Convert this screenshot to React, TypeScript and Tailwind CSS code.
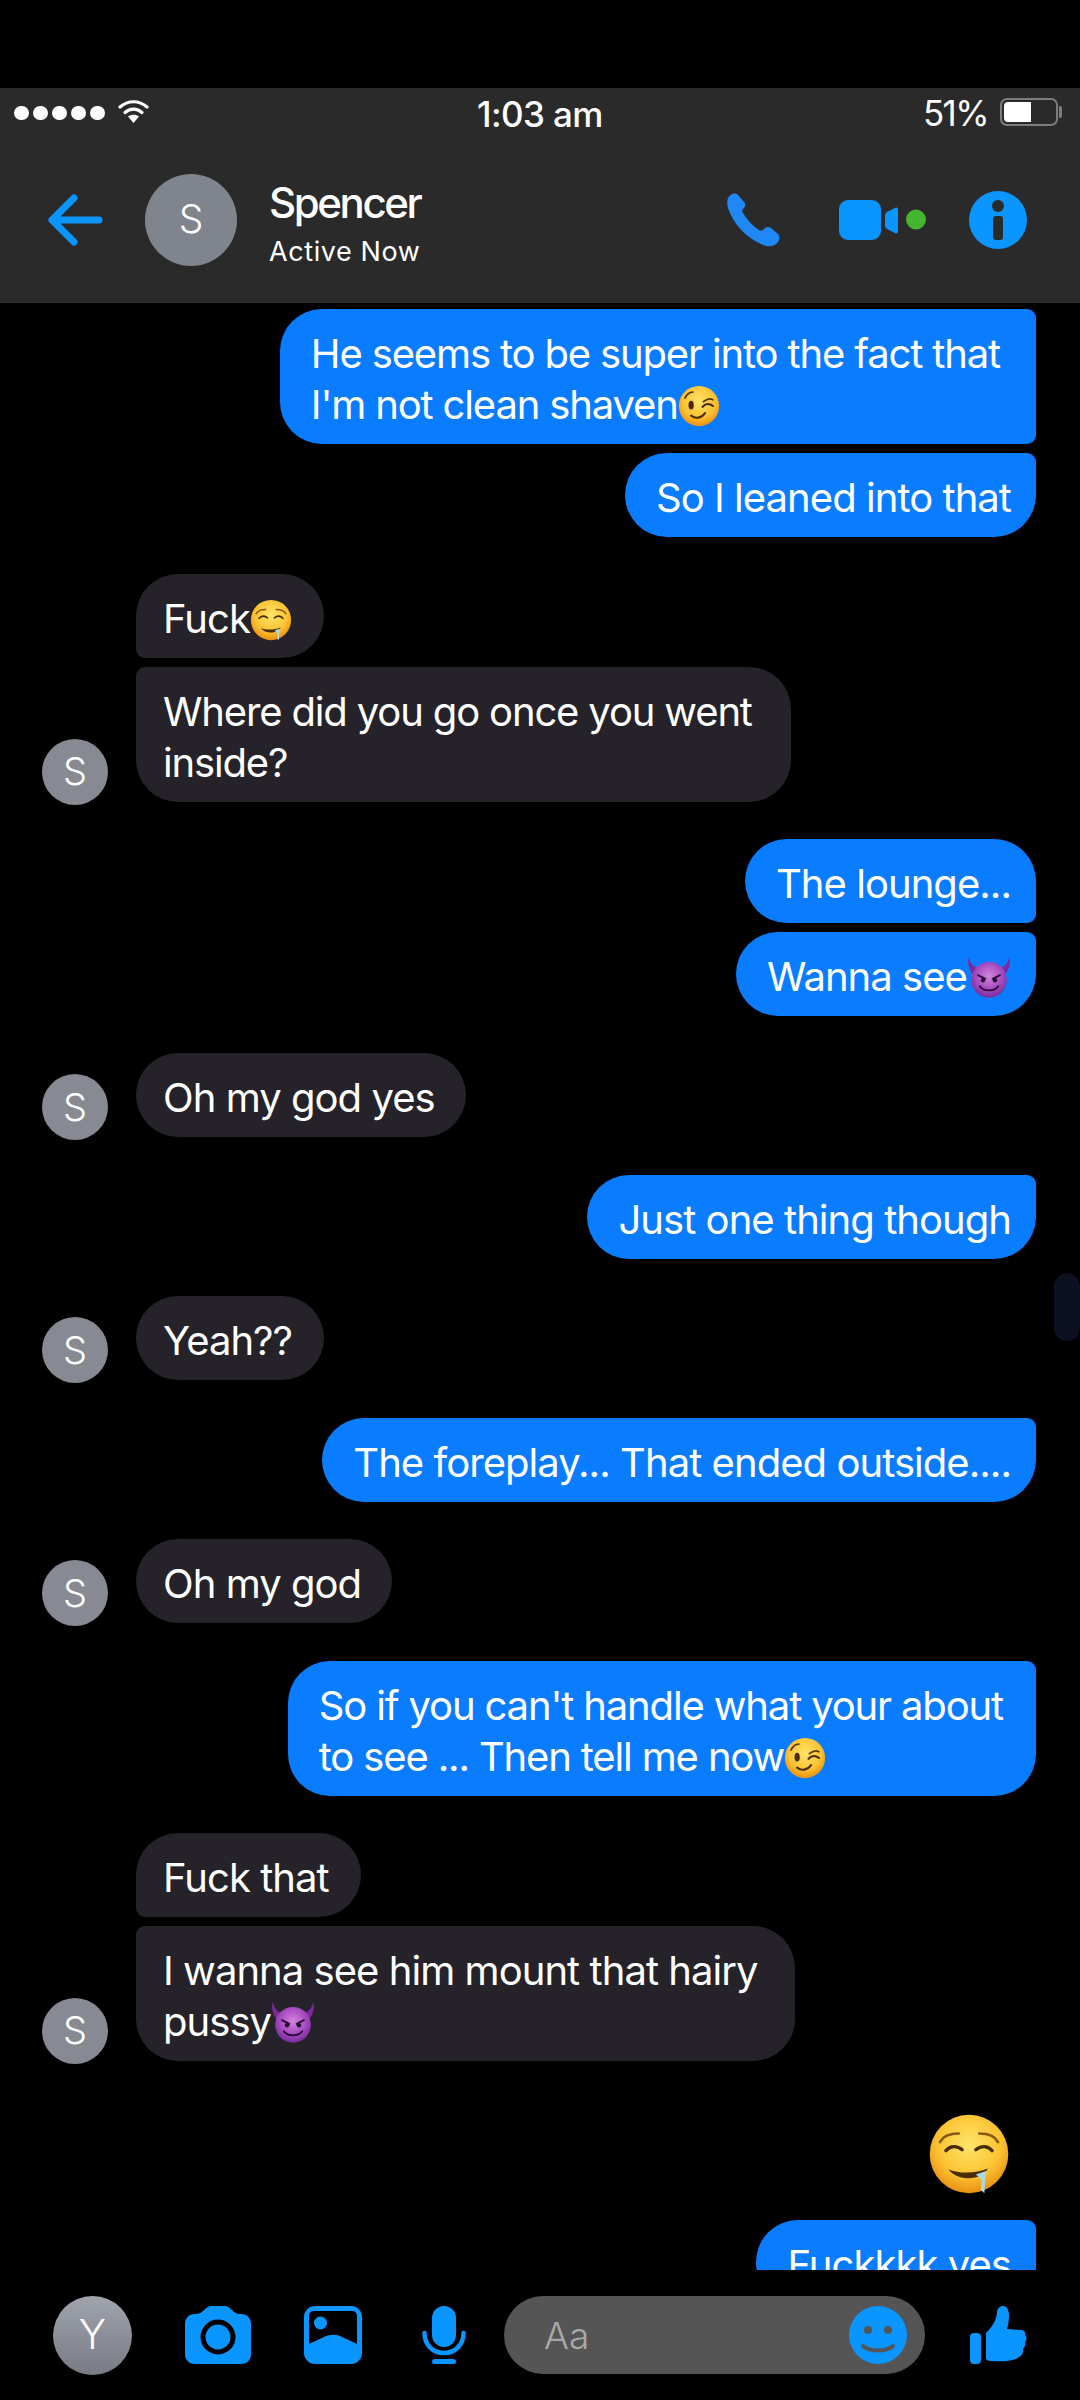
import { ReactNode } from "react";

const SANS = { fontFamily: "Inter, 'Noto Sans', sans-serif" };

type Corners = string;

function Face({ id, kind }: { id: string; kind: "drool" | "wink" | "devil" }) {
  if (kind === "devil") {
    return (
      <>
        <defs>
          <radialGradient id={id} cx="50%" cy="40%" r="60%">
            <stop offset="0%" stopColor="#d583e0" />
            <stop offset="60%" stopColor="#a64cc0" />
            <stop offset="100%" stopColor="#7a2c9c" />
          </radialGradient>
        </defs>
        <path d="M2 2 C3 9 7 13 13 15 L7 22 C2 16 0 9 2 2Z M46 2 C45 9 41 13 35 15 L41 22 C46 16 48 9 46 2Z" fill="#7a2a9a" />
        <circle cx="24" cy="27" r="19.5" fill={`url(#${id})`} />
        <path d="M12 22 L20 26 M36 22 L28 26" stroke="#2b0a35" strokeWidth="2" strokeLinecap="round" />
        <ellipse cx="17.5" cy="27.5" rx="2.4" ry="2.4" fill="#2b0a35" />
        <ellipse cx="30.5" cy="27.5" rx="2.4" ry="2.4" fill="#2b0a35" />
        <path d="M14 34 C18 40 30 40 34 34" stroke="#2b0a35" strokeWidth="2" fill="none" strokeLinecap="round" />
      </>
    );
  }
  return (
    <>
      <defs>
        <radialGradient id={id} cx="50%" cy="38%" r="65%">
          <stop offset="0%" stopColor="#ffe46a" />
          <stop offset="62%" stopColor="#fcc332" />
          <stop offset="100%" stopColor="#e8880f" />
        </radialGradient>
      </defs>
      <circle cx="24" cy="24" r="23" fill={`url(#${id})`} />
      {kind === "drool" ? (
        <>
          <path d="M7 17 C9 13 13 12 18 12 M41 17 C39 13 35 12 30 12" stroke="#8a5a12" strokeWidth="1.6" fill="none" strokeLinecap="round" />
          <path d="M10.5 22 C13 19 17 19 20 21.5 M37.5 22 C35 19 31 19 28 21.5" stroke="#4a2d08" strokeWidth="2" fill="none" strokeLinecap="round" />
          <path d="M12 33 C18 35.5 28 35.5 35 32.5 C32 39.5 18 40.5 12 33Z" fill="#4a2d08" />
          <path d="M28 36 L34 34 L33.5 38 L33 47 L31 45 L31.5 39Z" fill="#a9dbe8" />
        </>
      ) : (
        <>
          <path d="M8 15 C10 10 13 8 17 8 M29 19 C33 16 37 15 40 17" stroke="#5a390b" strokeWidth="2" fill="none" strokeLinecap="round" />
          <ellipse cx="15" cy="23" rx="3" ry="5" fill="#4a2d08" />
          <path d="M28 25 C31 21 36 21 40 24" stroke="#4a2d08" strokeWidth="2.4" fill="none" strokeLinecap="round" />
          <path d="M15 35 C20 39 27 38 31 32" stroke="#4a2d08" strokeWidth="2.4" fill="none" strokeLinecap="round" />
        </>
      )}
    </>
  );
}

function Emoji({ kind, id }: { kind: "drool" | "wink" | "devil"; id: string }) {
  return (
    <svg viewBox="0 0 48 48" className={kind === "devil" ? "inline-block w-[44px] h-[44px] align-[-8px]" : "inline-block w-[42px] h-[42px] align-[-8px]"}>
      <Face id={id} kind={kind} />
    </svg>
  );
}

function Sent({ children, corners, pr = "pr-[25px]", tight = false }: { children: ReactNode; corners: Corners; pr?: string; tight?: boolean }) {
  return (
    <div className={`self-end bg-[#0a7cff] text-white pl-[31px] pt-[19px] pb-[14px] text-[40px] leading-[51px] whitespace-nowrap rounded-l-[42px] ${tight ? "tracking-[-1.15px]" : "tracking-[-0.95px]"} ${corners} ${pr}`}>
      {children}
    </div>
  );
}

function Received({ children, corners, pr = "pr-[31px]", tight = false }: { children: ReactNode; corners: Corners; pr?: string; tight?: boolean }) {
  return (
    <div className={`self-start bg-[#252329] text-white pl-[27px] pt-[19px] pb-[14px] text-[40px] leading-[51px] whitespace-nowrap rounded-r-[42px] ${tight ? "tracking-[-1.15px]" : "tracking-[-0.95px]"} ${corners} ${pr}`}>
      {children}
    </div>
  );
}

function Peer({ children }: { children: ReactNode }) {
  return (
    <div className="flex items-end pl-[42px]">
      <div className="w-[66px] h-[66px] rounded-full bg-[#878a93] text-white flex items-center justify-center text-[38px] font-light mr-[28px] -mb-[3px] shrink-0">
        S
      </div>
      <div className="flex flex-col gap-[8.5px]">{children}</div>
    </div>
  );
}

function Mine({ children }: { children: ReactNode }) {
  return <div className="flex flex-col gap-[8.5px] pr-[44px]">{children}</div>;
}

const LAST_RIGHT = "rounded-tr-[9px] rounded-br-[42px]";
const SOLO_LEFT = "rounded-tl-[42px] rounded-bl-[42px]";

export default function App() {
  return (
    <div style={SANS} className="w-[1080px] h-[2400px] bg-black overflow-hidden flex flex-col">
      <div className="h-[88px] shrink-0" />

      {/* Top bar: system status and the conversation header */}
      <header className="h-[215px] shrink-0 bg-[#2a2a2a] text-white flex flex-col">
        <div className="h-[50px] relative flex items-center pl-[14px] pr-[18px]">
          <div className="flex gap-[4.5px]">
            {[0, 1, 2, 3, 4].map((n) => (
              <span key={n} className="w-[14.5px] h-[14.5px] rounded-full bg-white" />
            ))}
          </div>
          <svg viewBox="0 0 31 23" className="w-[31px] h-[23px] ml-[13px] -mt-[4px]" fill="none" stroke="#fff" strokeWidth="3.2" strokeLinecap="round">
            <path d="M2 7 C10 0 21 0 29 7" />
            <path d="M7 12.5 C12 8 19 8 24 12.5" />
            <path d="M15.5 23 L10 16.5 C13.5 14 17.5 14 21 16.5 Z" fill="#fff" stroke="none" />
          </svg>
          <span className="absolute left-[477px] top-[6px] text-[35px] leading-[40px] font-medium tracking-[-0.6px]">1:03 am</span>
          <span className="ml-auto text-[35px] leading-[40px] tracking-[-1.6px]">51%</span>
          <div className="ml-[12px] w-[58px] h-[28px] rounded-[7px] border-2 border-[#7c7c7c] p-[2px] -mt-[2px]">
            <div className="w-[27px] h-full rounded-l-[4px] bg-white" />
          </div>
          <div className="w-[3px] h-[12px] bg-[#7c7c7c] rounded-r-[2px] ml-[1px] -mt-[2px]" />
        </div>

        <div className="flex-1 flex items-center pl-[47px] pr-[53px] -mt-[2px]">
          <svg viewBox="0 0 56 52" className="w-[56px] h-[52px]" fill="none" stroke="#0a95ff" strokeWidth="7" strokeLinecap="round" strokeLinejoin="round">
            <path d="M52 26 H5 M27 4 L5 26 L27 48" />
          </svg>
          <div className="ml-[42px] w-[92px] h-[92px] rounded-full bg-[#80848d] flex items-center justify-center text-[39px] font-light">S</div>
          <div className="ml-[32px] flex flex-col mt-[10px]">
            <span className="text-[42px] leading-[46px] font-medium tracking-[-2.4px]">Spencer</span>
            <span className="text-[27px] leading-[34px] mt-[9px] tracking-[0.6px]">Active Now</span>
          </div>

          <svg viewBox="0 0 53 54" className="ml-auto w-[53px] h-[54px]" fill="#2088f5">
            <path d="M1 5 C3 1 8 -1 11 2 L17 9 C19 11 19 13 16 16 C15 17 15 18 16 20 C20 27 26 33 32 37 C34 38 35 38 37 36 C39 34 41 33 44 35 L51 41 C54 44 52 49 49 51 C45 54 40 54 34 51 C18 44 6 30 1 15 C0 11 0 8 1 5Z" />
          </svg>
          <svg viewBox="0 0 87 40" className="ml-[59px] w-[87px] h-[40px]">
            <rect width="42" height="40" rx="9" fill="#0a95ff" />
            <path d="M46 15 C46 14 47 13 48 12 L56 8 C58 7 59 8 59 10 V31 C59 33 58 34 56 33 L48 29 C47 28 46 27 46 26Z" fill="#0a95ff" />
            <circle cx="77" cy="19.5" r="10" fill="#44b52e" />
          </svg>
          <svg viewBox="0 0 58 58" className="ml-[43px] w-[58px] h-[58px]">
            <circle cx="29" cy="29" r="29" fill="#0a95ff" />
            <circle cx="29" cy="15" r="6" fill="#2a2a2a" />
            <rect x="24" y="25" width="10" height="24" rx="3" fill="#2a2a2a" />
          </svg>
        </div>
      </header>

      {/* Conversation, cut off by the composer */}
      <main className="relative flex-1 min-h-0 overflow-hidden pt-[6px] flex flex-col gap-[37.5px] text-white">
        <Mine>
          <Sent tight corners="rounded-tr-[9px] rounded-br-[9px]" pr="pr-[36px]">
            He seems to be super into the fact that
            <br />
            I'm not clean shaven
            <Emoji kind="wink" id="wink-a" />
          </Sent>
          <Sent corners={LAST_RIGHT}>So I leaned into that</Sent>
        </Mine>

        <Peer>
          <Received corners="rounded-tl-[42px] rounded-bl-[9px]" pr="pr-[32px]">
            Fuck
            <Emoji kind="drool" id="drool-a" />
          </Received>
          <Received tight corners="rounded-tl-[9px] rounded-bl-[42px]" pr="pr-[39px]">
            Where did you go once you went
            <br />
            inside?
          </Received>
        </Peer>

        <Mine>
          <Sent corners="rounded-tr-[42px] rounded-br-[9px]">The lounge...</Sent>
          <Sent corners={LAST_RIGHT}>
            Wanna see
            <Emoji kind="devil" id="devil-a" />
          </Sent>
        </Mine>

        <Peer>
          <Received corners={SOLO_LEFT}>Oh my god yes</Received>
        </Peer>

        <Mine>
          <Sent corners={LAST_RIGHT}>Just one thing though</Sent>
        </Mine>

        <Peer>
          <Received corners={SOLO_LEFT} pr="pr-[32px]">Yeah??</Received>
        </Peer>

        <Mine>
          <Sent corners={LAST_RIGHT}>The foreplay... That ended outside....</Sent>
        </Mine>

        <Peer>
          <Received corners={SOLO_LEFT}>Oh my god</Received>
        </Peer>

        <Mine>
          <Sent tight corners={LAST_RIGHT} pr="pr-[33px]">
            So if you can't handle what your about
            <br />
            to see ... Then tell me now
            <Emoji kind="wink" id="wink-b" />
          </Sent>
        </Mine>

        <Peer>
          <Received corners="rounded-tl-[42px] rounded-bl-[9px]" pr="pr-[32px]">Fuck that</Received>
          <Received corners="rounded-tl-[9px] rounded-bl-[42px]" pr="pr-[37px]">
            I wanna see him mount that hairy
            <br />
            pussy
            <Emoji kind="devil" id="devil-b" />
          </Received>
        </Peer>

        <div className="mt-[15px] pr-[44px] flex flex-col gap-[25px]">
          <svg viewBox="0 0 48 48" className="self-end mr-[26px] w-[82px] h-[82px]">
            <Face id="drool-big" kind="drool" />
          </svg>
          <div className="self-end bg-[#0a7cff] pl-[31px] pr-[25px] pt-[19px] pb-[14px] text-[40px] leading-[51px] tracking-[-0.95px] rounded-l-[42px] rounded-tr-[9px]">
            Fuckkkk yes
          </div>
        </div>

        <div className="absolute left-[1054px] top-[970px] w-[26px] h-[68px] rounded-full bg-[#0b1120]" />
      </main>

      {/* Composer */}
      <footer className="h-[130px] shrink-0 flex items-center pl-[53px]">
        <div className="w-[79px] h-[79px] rounded-full bg-linear-to-b from-[#a0a4ad] to-[#787b83] text-white flex items-center justify-center text-[41px] font-light">
          Y
        </div>
        <svg viewBox="0 0 66 58" className="ml-[53px] w-[66px] h-[58px]">
          <path d="M10 8 C14 8 16 7 18 5 C21 2 23 0 27 0 H39 C43 0 45 2 48 5 C50 7 52 8 56 8 C62 8 66 12 66 18 V48 C66 54 62 58 56 58 H10 C4 58 0 54 0 48 V18 C0 12 4 8 10 8Z" fill="#0a95ff" />
          <circle cx="33" cy="31" r="15" fill="#0a95ff" stroke="#000" strokeWidth="5" />
        </svg>
        <svg viewBox="0 0 58 58" className="ml-[53px] w-[58px] h-[58px]">
          <rect width="58" height="58" rx="11" fill="#0a95ff" />
          <path d="M10 5 H48 C51 5 53 7 53 10 V38 L38 31 C33 28 26 28 20 31 L5 38 V10 C5 7 7 5 10 5Z" fill="#000" />
          <circle cx="16.5" cy="17" r="6.5" fill="#0a95ff" />
        </svg>
        <svg viewBox="0 0 44 58" className="ml-[60px] w-[44px] h-[58px]" fill="none">
          <rect x="10" y="0" width="24" height="41" rx="12" fill="#0a95ff" />
          <path d="M2.5 27 C2.5 38 10 47 22 47 C34 47 41.5 38 41.5 27" stroke="#0a95ff" strokeWidth="4.5" strokeLinecap="round" />
          <rect x="10" y="53" width="24" height="5" rx="2.5" fill="#0a95ff" />
        </svg>
        <div className="ml-[38px] w-[421px] h-[78px] rounded-full bg-[#555555] flex items-center pl-[40px] pr-[18px]">
          <span className="text-[37px] text-[#a9a9a9] font-light mt-[2px]">Aa</span>
          <svg viewBox="0 0 58 58" className="ml-auto w-[58px] h-[58px]">
            <circle cx="29" cy="29" r="29" fill="#0a95ff" />
            <circle cx="19" cy="24" r="4" fill="#555555" />
            <circle cx="39" cy="24" r="4" fill="#555555" />
            <path d="M14 40 C21 46 37 46 44 40" stroke="#555555" strokeWidth="4" fill="none" strokeLinecap="round" />
          </svg>
        </div>
        <svg viewBox="0 0 57 58" className="ml-[45px] w-[57px] h-[58px]" fill="#0a95ff">
          <rect x="0" y="27" width="11" height="31" rx="4" />
          <path d="M16 27 C22 21 26 15 27 7 C27 2 30 0 33 0 C37 0 39 4 39 10 C39 15 38 20 37 23 L51 24 C54 24 56 26 55 29 C57 31 57 34 55 36 C56 38 55 41 53 43 C54 46 52 50 49 51 C44 55 32 56 21 55 C18 55 16 54 16 52Z" />
        </svg>
      </footer>
    </div>
  );
}
